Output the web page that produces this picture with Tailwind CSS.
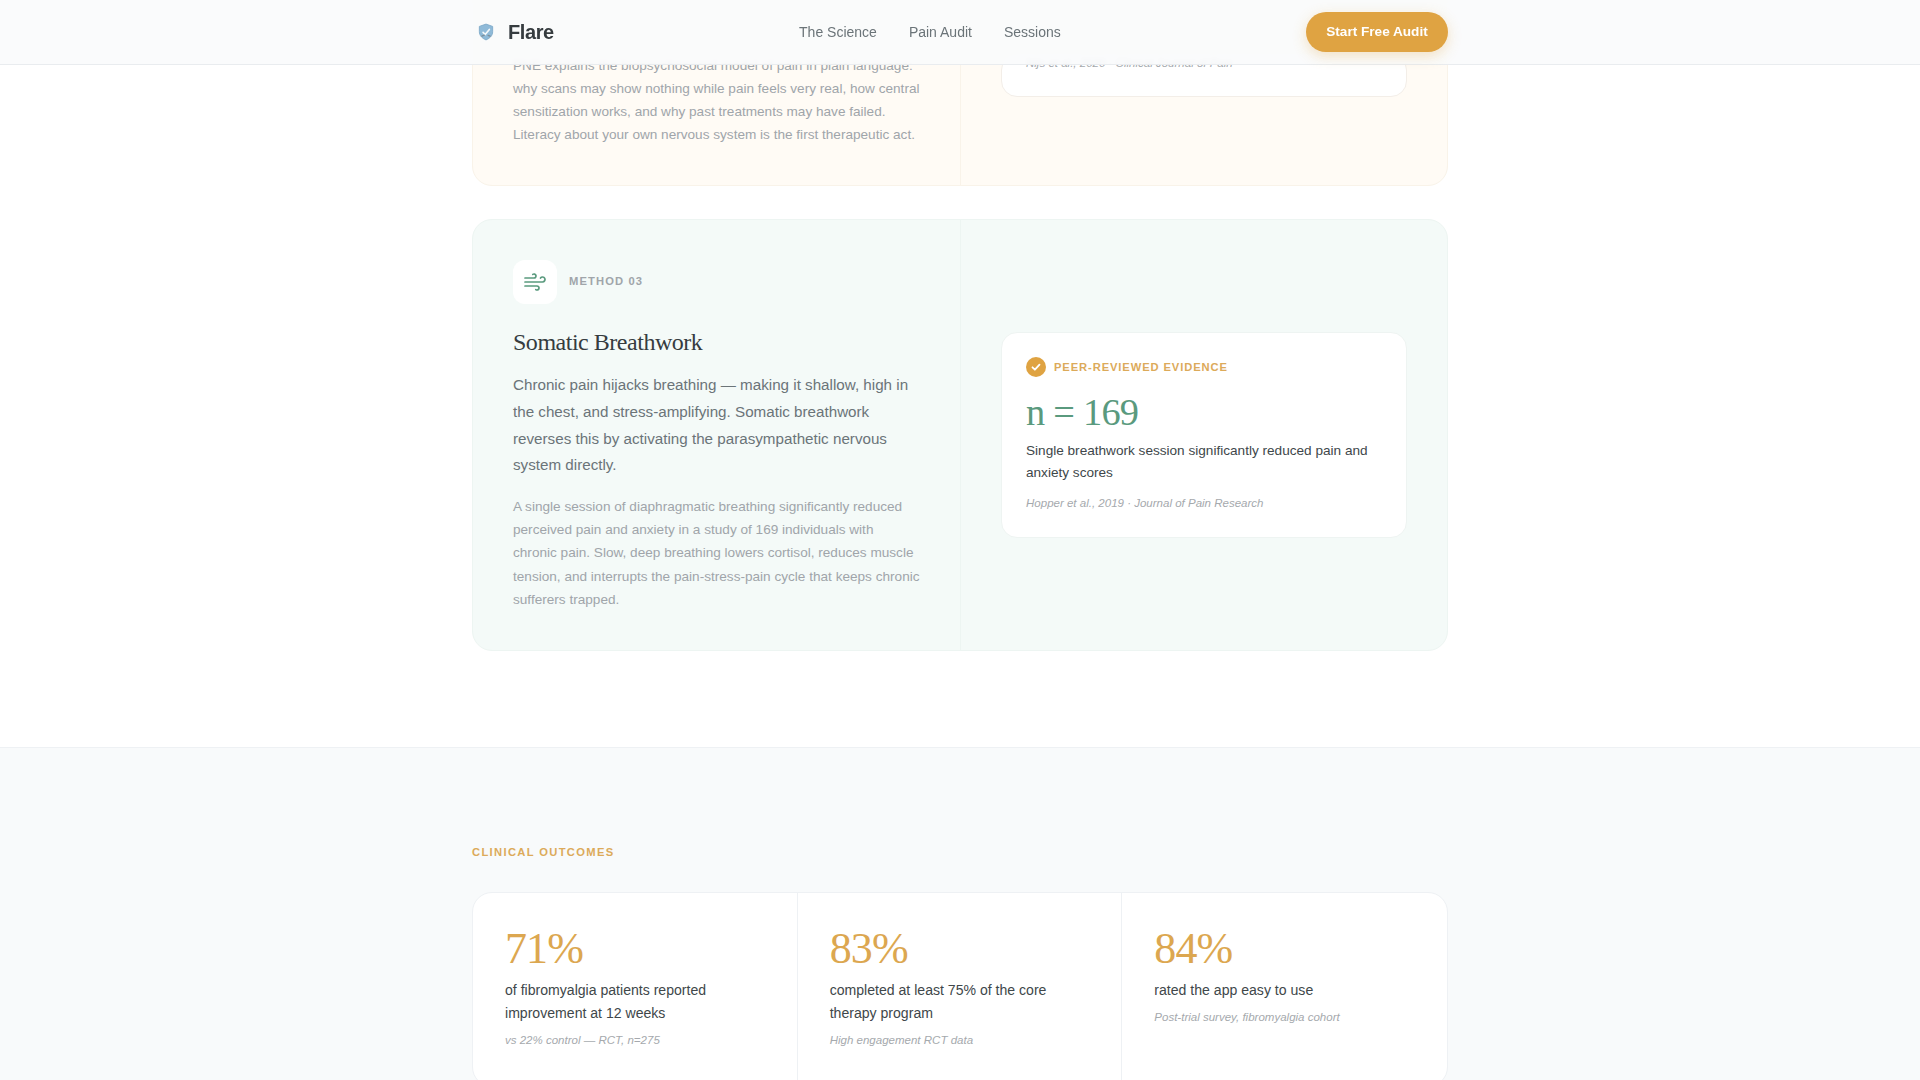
<!DOCTYPE html>
<html lang="en">
<head>
<meta charset="utf-8">
<title>Flare</title>
<script src="https://cdn.jsdelivr.net/npm/@tailwindcss/browser@4"></script>
</head>
<body class="bg-white font-['Liberation_Sans',Arial,sans-serif] text-[#2d3436]">
<nav class="fixed top-0 left-0 right-0 z-10 h-[65px] bg-[#fafbfc]/90 backdrop-blur-[2px] border-b border-[#e9ecef]">
  <div class="w-[976px] h-full mx-auto flex items-center justify-between">
    <a class="flex items-center gap-[12px] pl-[4px]">
      <svg class="w-[20px] h-[20px]" viewBox="0 0 24 24" fill="none">
        <path d="M12 2.500l8 2.800v6.200c0 4.800-3.200 8-8 10-4.800-2-8-5.200-8-10v-6.200z" fill="#8fbad8" stroke="#7ba7c6" stroke-width="1"/>
        <path d="M8.500 12.500l2.500 2.500 5-6" stroke="#f4f8fb" stroke-width="2" stroke-linecap="round" stroke-linejoin="round"/>
        <path d="M7 17l3-1.200M14.500 16l2.500 1" stroke="#7d8f9c" stroke-width="1.500" stroke-linecap="round"/>
      </svg>
      <span class="text-[20px] leading-[28px] font-bold tracking-[-0.02em] text-[#363c3f]">Flare</span>
    </a>
    <div class="flex items-center gap-[32px] text-[14px] text-[#6b7478] mt-[1px]">
      <a>The Science</a><a>Pain Audit</a><a>Sessions</a>
    </div>
    <button class="w-[142px] h-[40px] rounded-full bg-[#dfa342] text-white text-[13.6px] font-bold shadow-[0_4px_14px_rgba(223,162,64,0.3)]">Start Free Audit</button>
  </div>
</nav>

<div class="h-[1080px] overflow-hidden">
  <main class="mt-[-248px]">
    <section class="w-[976px] mx-auto flex flex-col gap-[33px]">
      <article class="h-[434px] rounded-[20px] border border-[#f9f3e9] bg-[#fffbf5] grid grid-cols-[488px_1fr]">
        <div class="pt-[40px] px-[40px] pb-[39px] border-r border-[#f9f3e9] flex flex-col justify-end">
          <p class="text-[13.600px] leading-[23.120px] text-[#a0a5aa]">PNE explains the biopsychosocial model of pain in plain language:<br>why scans may show nothing while pain feels very real, how central<br>sensitization works, and why past treatments may have failed.<br>Literacy about your own nervous system is the first therapeutic act.</p>
        </div>
        <div class="px-[40px] pb-[88px] flex flex-col justify-end">
          <div class="rounded-[16px] border border-[#f3eee8] bg-white px-[24px] pb-[24px]">
            <p class="text-[11.520px] italic text-[#a5a9ad]">Nijs et al., 2020 · Clinical Journal of Pain</p>
          </div>
        </div>
      </article>

      <article class="rounded-[20px] border border-[#edf5f2] bg-[#f4faf8] grid grid-cols-[488px_1fr]">
        <div class="pt-[40px] px-[40px] pb-[39px] border-r border-[#edf5f2]">
          <div class="flex items-center gap-[12px] mb-[22px]">
            <div class="w-[44px] h-[44px] rounded-[12px] bg-white flex items-center justify-center">
              <svg class="w-[24px] h-[24px]" viewBox="0 0 24 24" fill="none" stroke="#5a9a7e" stroke-width="1.700" stroke-linecap="round" stroke-linejoin="round">
                <path d="M12.800 19.600A2 2 0 1 0 14 16H2"/><path d="M17.500 8a2.500 2.500 0 1 1 2 4H2"/><path d="M9.800 4.400A2 2 0 1 1 11 8H2"/>
              </svg>
            </div>
            <span class="text-[11.200px] font-bold tracking-[0.1em] uppercase text-[#a0a5aa] mb-[1px]">Method 03</span>
          </div>
          <h3 class="font-['Liberation_Serif',serif] text-[24px] leading-[32px] tracking-[-0.02em] font-normal text-[#363c3f] mb-[14px]">Somatic Breathwork</h3>
          <p class="text-[15.200px] leading-[26.800px] text-[#6b7478] mb-[16px]">Chronic pain hijacks breathing — making it shallow, high in the chest, and stress-amplifying. Somatic breathwork reverses this by activating the parasympathetic nervous system directly.</p>
          <p class="text-[13.600px] leading-[23.120px] text-[#a0a5aa]">A single session of diaphragmatic breathing significantly reduced perceived pain and anxiety in a study of 169 individuals with chronic pain. Slow, deep breathing lowers cortisol, reduces muscle tension, and interrupts the pain-stress-pain cycle that keeps chronic sufferers trapped.</p>
        </div>
        <div class="px-[40px] flex items-center">
          <div class="w-full rounded-[16px] border border-[#eef4f2] bg-white p-[24px]">
            <div class="flex items-center gap-[8px] mb-[13px]">
              <svg class="w-[20px] h-[20px]" viewBox="0 0 20 20" fill="none">
                <circle cx="10" cy="10" r="10" fill="#dfa342"/>
                <path d="M6.500 10.300l2.400 2.400 4.600-5" stroke="#fff" stroke-width="1.800" stroke-linecap="round" stroke-linejoin="round"/>
              </svg>
              <span class="text-[11.200px] font-bold tracking-[0.08em] uppercase text-[#dcaa5a]">Peer-Reviewed Evidence</span>
            </div>
            <div class="font-['Liberation_Serif',serif] text-[38.400px] leading-[44px] tracking-[-0.02em] text-[#5a9a7e] mb-[6px]">n = 169</div>
            <p class="text-[13.600px] leading-[22px] text-[#40474a] mb-[9px]">Single breathwork session significantly reduced pain and anxiety scores</p>
            <p class="text-[11.520px] leading-[20px] italic text-[#a5a9ad]">Hopper et al., 2019 · Journal of Pain Research</p>
          </div>
        </div>
      </article>
    </section>

    <section class="mt-[96px] border-t border-[#eef1f4] bg-[#f8fafb] pt-[96px] pb-[96px]">
      <div class="w-[976px] mx-auto">
        <h2 class="text-[11.200px] leading-[16px] font-bold tracking-[0.12em] uppercase text-[#dcaa5a] mb-[32px]">Clinical Outcomes</h2>
        <div class="rounded-[20px] border border-[#eef1f4] bg-white grid grid-cols-3">
          <div class="p-[32px] pb-[36px] border-r border-[#eef1f4]">
            <div class="font-['Liberation_Serif',serif] text-[44px] leading-[47px] tracking-[-0.02em] text-[#dca750] mb-[7px]">71%</div>
            <p class="text-[14.080px] leading-[23px] text-[#40474a] mb-[5px]">of fibromyalgia patients reported improvement at 12 weeks</p>
            <p class="text-[11.520px] leading-[20px] italic text-[#a5a9ad]">vs 22% control — RCT, n=275</p>
          </div>
          <div class="p-[32px] pb-[36px] border-r border-[#eef1f4]">
            <div class="font-['Liberation_Serif',serif] text-[44px] leading-[47px] tracking-[-0.02em] text-[#dca750] mb-[7px]">83%</div>
            <p class="text-[14.080px] leading-[23px] text-[#40474a] mb-[5px]">completed at least 75% of the core therapy program</p>
            <p class="text-[11.520px] leading-[20px] italic text-[#a5a9ad]">High engagement RCT data</p>
          </div>
          <div class="p-[32px] pb-[36px]">
            <div class="font-['Liberation_Serif',serif] text-[44px] leading-[47px] tracking-[-0.02em] text-[#dca750] mb-[7px]">84%</div>
            <p class="text-[14.080px] leading-[23px] text-[#40474a] mb-[5px]">rated the app easy to use</p>
            <p class="text-[11.520px] leading-[20px] italic text-[#a5a9ad]">Post-trial survey, fibromyalgia cohort</p>
          </div>
        </div>
      </div>
    </section>
  </main>
</div>
</body>
</html>
